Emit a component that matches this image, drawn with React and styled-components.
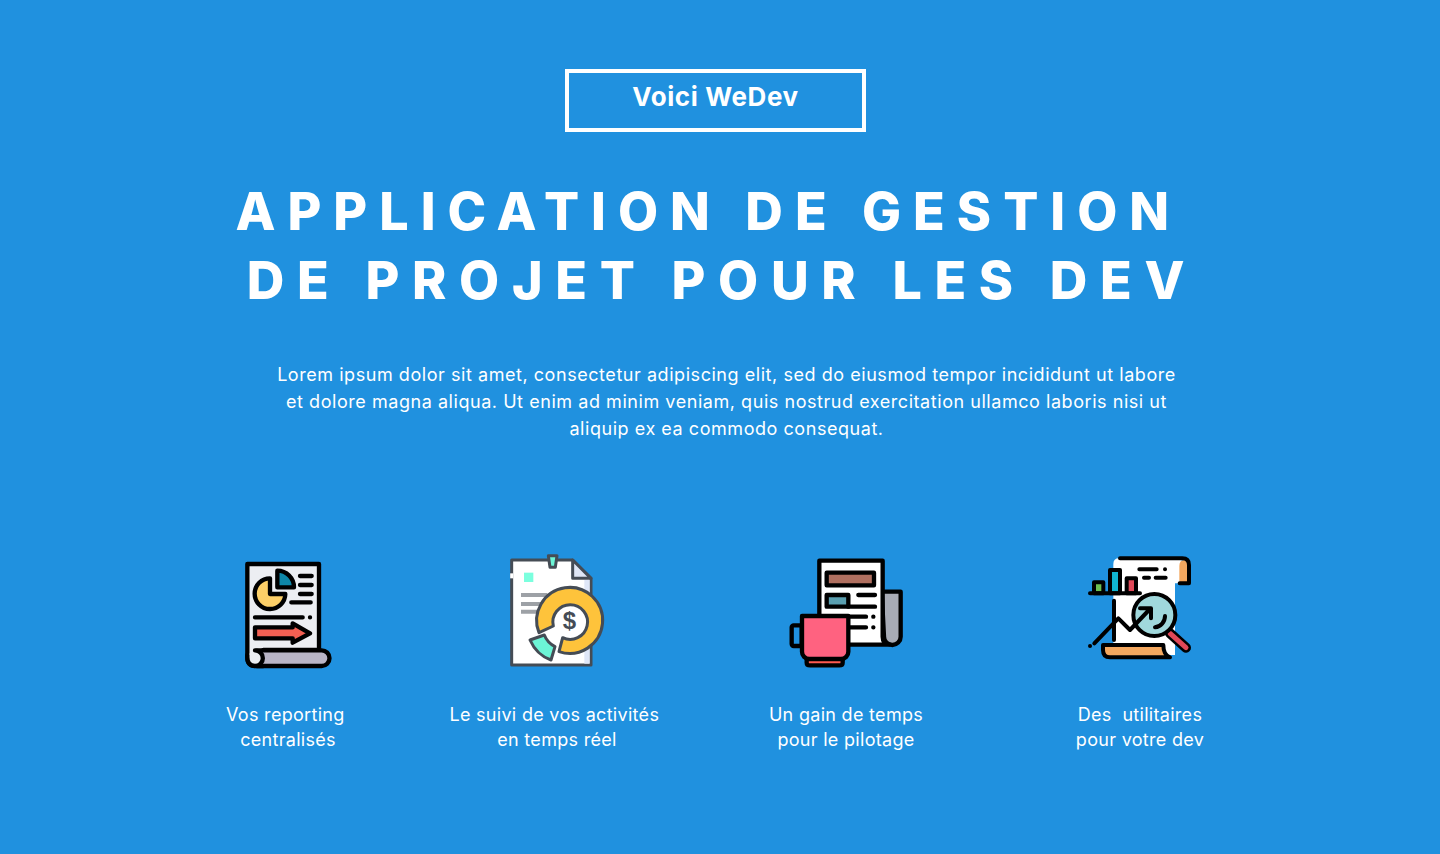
import styled, { createGlobalStyle } from "styled-components";

const GlobalStyle = createGlobalStyle`
  html, body {
    margin: 0;
    padding: 0;
    background: #2091df;
  }
`;

const ReportIcon = () => (
  <IconSvg viewBox="9 0 390 420">
    <g stroke="#000" strokeWidth="13" strokeLinecap="round" strokeLinejoin="round">
      <path d="M82 72H297V330H130V378H108Q82 378 82 352Z" fill="#eceef2" />
      <path d="M110 331H305A23.500 23.500 0 0 1 305 378H110Z" fill="#b9b5c6" />
      <path d="M105 331A23.500 23.500 0 0 1 105 378Q82 378 82 352V345" fill="#eceef2" />
      <path d="M150 115A46 46 0 1 0 196 162H150Z" fill="#fdd068" />
      <path d="M172 92A50 50 0 0 1 222 142H172Z" fill="#0e87a8" />
      <path d="M240 108H275M240 135H275M240 162H275M214 187H272M105 232H248M270 232H270.100" fill="none" />
      <path d="M105 262H218V250L270 280L218 308V295H105Z" fill="#f25f52" />
    </g>
  </IconSvg>
);

const BudgetIcon = () => (
  <IconSvg viewBox="6 0 390 420">
    <g stroke="#454c55" strokeWidth="9" strokeLinejoin="round">
      <path d="M65 60H248L303 115V375H65Z" fill="#fff" />
      <path d="M283 120H299V371H283Z" fill="#dfe7f8" stroke="none" />
      <path d="M248 60V115H303Z" fill="#dfe6f5" />
      <path d="M65 100V115" stroke="#fff" />
      <path d="M175 47H201L196 82H180Z" fill="#6cf5d6" />
      <rect x="102" y="98" width="28" height="28" fill="#7bffde" stroke="none" />
      <path d="M93 165H172M93 192H160M93 215H150" stroke="#9da1a6" strokeWidth="12" fill="none" />
      <circle cx="238" cy="240" r="52" fill="#fff" stroke="none" />
      <path d="M147 278A99 99 0 1 1 207 335L218 293A52 52 0 1 0 190 258Z" fill="#fec33b" />
      <path d="M120 300L163 285Q172 308 195 320L183 360Q140 345 120 300Z" fill="#6cf5d6" />
    </g>
    <DollarText x="238" y="266" textAnchor="middle">$</DollarText>
  </IconSvg>
);

const CoffeeIcon = () => (
  <IconSvg viewBox="3 0 390 420">
    <g stroke="#000" strokeWidth="13" strokeLinecap="round" strokeLinejoin="round">
      <path d="M305 155H362V290A25 25 0 0 1 312 290Z" fill="#a8abb5" />
      <path d="M118 62H308V290Q308 312 330 314H118Z" fill="#fff" />
      <rect x="140" y="98" width="142" height="38" fill="#b07060" />
      <rect x="140" y="165" width="65" height="35" fill="#5a9fb0" />
      <path d="M235 165H285M205 200H285M200 230H258M280 230H280.100M210 262H258M280 262H280.100" fill="none" />
      <rect x="35" y="256" width="30" height="62" rx="6" fill="#2091df" />
      <path d="M80 355V368Q80 376 90 376H178Q188 376 188 368V355Z" fill="#ff5a50" />
      <path d="M66 228H205V335A22 22 0 0 1 183 357H88A22 22 0 0 1 66 335Z" fill="#ff6280" />
    </g>
  </IconSvg>
);

const SearchIcon = () => (
  <IconSvg viewBox="0 0 390 420">
    <path d="M115 72Q115 55 132 55H320V130H300V345H115Z" fill="#fff" />
    <path d="M313 78Q313 60 328 60H337V130H313Z" fill="#f4a75e" />
    <g stroke="#000" strokeWidth="12" strokeLinecap="round" strokeLinejoin="round">
      <path d="M135 55H322Q342 55 342 75V130H314" fill="none" />
      <path d="M193 88H245M270 88H270.100M207 113H222M242 113H272" fill="none" />
      <rect x="57" y="127" width="28" height="33" fill="#6cbf50" />
      <rect x="105" y="90" width="30" height="70" fill="#10b5d0" />
      <rect x="155" y="115" width="28" height="45" fill="#e04858" />
      <path d="M45 160H195M117 182V300" fill="none" />
      <path d="M84 315H265Q265 345 285 352H105Q84 352 84 330Z" fill="#f4a75e" />
      <path d="M285 280L333 323" strokeWidth="30" fill="none" />
      <path d="M285 280L333 323" stroke="#e04858" strokeWidth="15" fill="none" />
      <circle cx="238" cy="225" r="63" fill="#a0d8dc" />
      <path d="M58 310L130 235L165 270L222 210M195 205H228V235M45 318H45.100M270 228A34 34 0 0 1 240 262" fill="none" />
    </g>
  </IconSvg>
);

const features = [
  { Icon: ReportIcon, lines: ["Vos reporting ", "centralisés"] },
  { Icon: BudgetIcon, lines: ["Le suivi de vos activités ", "en temps réel"] },
  { Icon: CoffeeIcon, lines: ["Un gain de temps", "pour le pilotage"] },
  { Icon: SearchIcon, lines: ["Des  utilitaires", "pour votre dev"] },
];

const App = () => {
  return (
    <Page>
      <GlobalStyle />
      <BadgeBox>Voici WeDev</BadgeBox>
      <Title>
        <TitleLine $spacing={12} $trail={4}>{"APPLICATION DE GESTION "}</TitleLine>
        <TitleLine $spacing={12.65}>DE PROJET POUR LES DEV</TitleLine>
      </Title>
      <Lead>
        Lorem ipsum dolor sit amet, consectetur adipiscing elit, sed do eiusmod
        tempor incididunt ut labore et dolore magna aliqua. Ut enim ad minim
        veniam, quis nostrud exercitation ullamco laboris nisi ut aliquip ex ea
        commodo consequat.
      </Lead>
      <Features>
        {features.map(({ Icon, lines }) => (
          <Feature key={lines[0]}>
            <Icon />
            <FeatureText>
              {lines.map((line) => (
                <span key={line}>{line}</span>
              ))}
            </FeatureText>
          </Feature>
        ))}
      </Features>
    </Page>
  );
};

export default App;

const Page = styled.div`
  width: 1440px;
  height: 854px;
  padding-top: 69px;
  box-sizing: border-box;
  overflow: hidden;
  display: flex;
  flex-direction: column;
  align-items: center;
  background: #2091df;
  color: #fff;
`;

const BadgeBox = styled.div`
  width: 301px;
  height: 63px;
  box-sizing: border-box;
  margin-left: -9px;
  padding-top: 10px;
  border: 4px solid #fff;
  text-align: center;
  font-family: Inter, "Liberation Sans", sans-serif;
  font-size: 26px;
  line-height: 28px;
  font-weight: 700;
  letter-spacing: 0.6px;
`;

const Title = styled.h1`
  display: flex;
  flex-direction: column;
  align-items: center;
  margin: 44.500px 0 46px 4px;
  font-family: Inter, "Liberation Sans", sans-serif;
  font-size: 52px;
  line-height: 69px;
  font-weight: 800;
  white-space: pre;
`;

const TitleLine = styled.span`
  letter-spacing: ${(props) => props.$spacing}px;
  padding-right: ${(props) => props.$trail || 0}px;
`;

const Lead = styled.p`
  width: 905px;
  margin: 0 0 98px 13px;
  text-align: center;
  font-family: Inter, "Liberation Sans", sans-serif;
  font-size: 18px;
  line-height: 27px;
  letter-spacing: 0.55px;
`;

const Features = styled.div`
  align-self: flex-start;
  margin-left: 148px;
  display: grid;
  grid-template-columns: 280px 258px 320px 268px;
`;

const Feature = styled.div`
  display: flex;
  flex-direction: column;
  align-items: center;
`;

const IconSvg = styled.svg`
  display: block;
  width: 130px;
  height: 140px;
`;

const DollarText = styled.text`
  font-family: "Liberation Sans", sans-serif;
  font-size: 72px;
  font-weight: 700;
  fill: #454c55;
`;

const FeatureText = styled.div`
  display: flex;
  flex-direction: column;
  align-items: center;
  margin-top: 22px;
  font-family: Inter, "Liberation Sans", sans-serif;
  font-size: 18px;
  line-height: 25px;
  letter-spacing: 0.3px;
  white-space: pre;
`;
